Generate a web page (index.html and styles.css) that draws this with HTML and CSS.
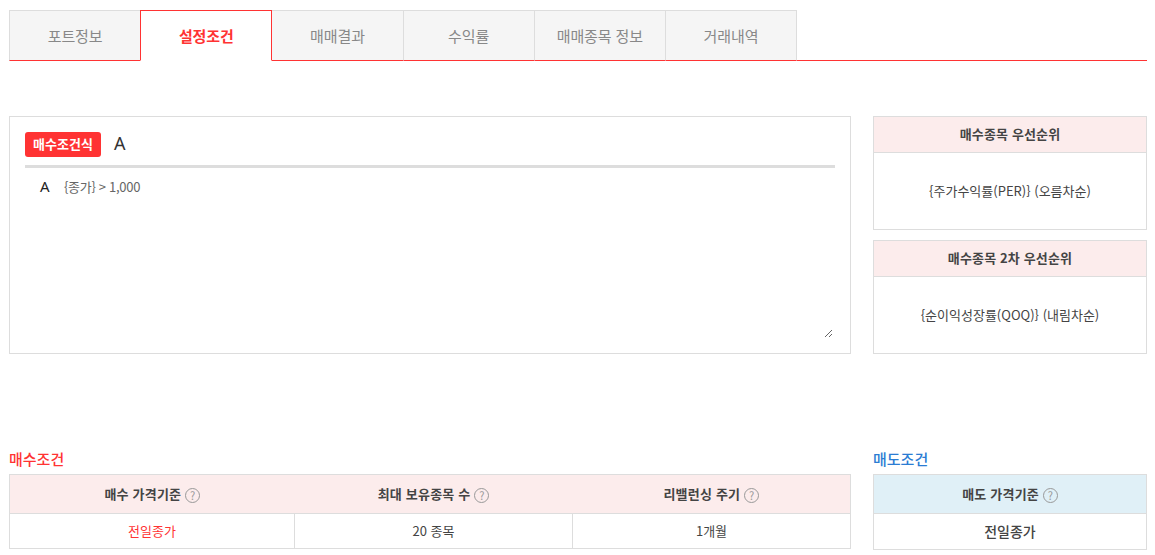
FILE: index.html
```html
<!doctype html>
<html lang="ko">
<head>
    <meta charset="UTF-8">
    <title>설정조건</title>
    <link rel="stylesheet" href="styles.css">
</head>
<body>
<!-- tabs -->
<ul class="tabs">
    <li class="tab">포트정보</li>
    <li class="tab on">설정조건</li>
    <li class="tab">매매결과</li>
    <li class="tab">수익률</li>
    <li class="tab">매매종목 정보</li>
    <li class="tab">거래내역</li>
</ul>

<div class="cond-row">
    <div class="formula">
        <div class="formula-head">
            <span class="badge">매수조건식</span>
            <span class="formula-name">A</span>
        </div>
        <div class="formula-body">
            <span class="formula-key">A</span><span class="formula-text">{종가} &gt; 1,000</span>
        </div>
    </div>
    <div class="side">
        <div class="rank">
            <div class="rank-title">매수종목 우선순위</div>
            <div class="rank-value">{주가수익률(PER)} (오름차순)</div>
        </div>
        <div class="rank">
            <div class="rank-title">매수종목 2차 우선순위</div>
            <div class="rank-value">{순이익성장률(QOQ)} (내림차순)</div>
        </div>
    </div>
</div>

<div class="bottom-row">
    <div class="buy">
        <h3 class="sec-title red">매수조건</h3>
        <table class="info">
            <tr>
                <th class="col1">매수 가격기준 <span class="help">?</span></th>
                <th class="col2">최대 보유종목 수 <span class="help">?</span></th>
                <th>리밸런싱 주기 <span class="help">?</span></th>
            </tr>
            <tr>
                <td class="red">전일종가</td>
                <td>20 종목</td>
                <td>1개월</td>
            </tr>
        </table>
    </div>
    <div class="sell">
        <h3 class="sec-title blue">매도조건</h3>
        <table class="info">
            <tr>
                <th>매도 가격기준 <span class="help">?</span></th>
            </tr>
            <tr>
                <td class="strong">전일종가</td>
            </tr>
        </table>
    </div>
</div>
</body>
</html>
```

FILE: styles.css
```css
* {
    margin: 0;
    padding: 0;
    box-sizing: border-box;
}

body {
    background: #fff;
    padding: 10px 8px 0 9px;
    font-family: "Noto Sans CJK KR", "Noto Sans", sans-serif;
    font-size: 13px;
    color: #444;
    overflow: hidden;
}

ul, li {
    list-style: none;
}

.tabs {
    display: flex;
    height: 51px;
    border-bottom: 1px solid #ff3333;
}

.tab {
    width: 131.2px;
    height: 51px;
    line-height: 49px;
    background: #f5f5f5;
    border-top: 1px solid #dddddd;
    border-left: 1px solid #dddddd;
    border-bottom: 1px solid #ff3333;
    color: #888;
    font-size: 15px;
    letter-spacing: -0.1px;
    text-align: center;
}

.tab:last-child {
    width: 132px;
    border-right: 1px solid #dddddd;
}

.tab.on {
    position: relative;
    z-index: 1;
    width: 132.2px;
    margin-right: -1px;
    background: #fff;
    border: 1px solid #ff3333;
    border-bottom: 1px solid #fff;
    color: #ff3333;
    font-weight: 700;
}

.cond-row {
    display: flex;
    justify-content: space-between;
    margin-top: 55px;
}

.formula {
    width: 842px;
    height: 238px;
    padding: 15px 15px 0;
    border: 1px solid #dddddd;
}

.formula-head {
    display: flex;
    align-items: center;
    box-sizing: content-box;
    height: 25px;
    padding-bottom: 8px;
    border-bottom: 3px solid #dddddd;
}

.badge {
    width: 76px;
    height: 25px;
    line-height: 24px;
    background: #ff3333;
    border-radius: 3px;
    color: #fff;
    font-size: 13px;
    font-weight: 700;
    text-align: center;
}

.formula-name {
    margin-left: 13px;
    line-height: 23px;
    height: 25px;
    color: #333;
    font-family: "Noto Sans", sans-serif;
    font-size: 18px;
}

.formula-body {
    width: calc(100% - 2px);
    height: 170px;
    padding: 8px 15px 0;
    overflow: auto;
    resize: vertical;
    line-height: 20px;
}

.formula-key {
    display: inline-block;
    width: 24px;
    color: #222;
    font-family: "Noto Sans", sans-serif;
    font-size: 15px;
}

.formula-text {
    color: #666;
    font-size: 13px;
    letter-spacing: -0.3px;
}

.side {
    display: flex;
    flex-direction: column;
    gap: 10px;
    width: 274px;
}

.rank {
    height: 114px;
    border: 1px solid #dddddd;
}

.rank-title {
    height: 36px;
    line-height: 34px;
    background: #fcecec;
    border-bottom: 1px solid #dddddd;
    font-weight: 700;
    letter-spacing: 0.15px;
    text-align: center;
}

.rank-value {
    line-height: 75px;
    font-size: 13px;
    color: #444;
    text-align: center;
}

.bottom-row {
    display: flex;
    justify-content: space-between;
    margin-top: 94px;
}

.buy {
    width: 842px;
}

.sell {
    width: 274px;
}

.sec-title {
    height: 26px;
    line-height: 22px;
    font-size: 15px;
    font-weight: 500;
}

.red {
    color: #ff3333;
}

.blue {
    color: #2b7cd3;
}

.info {
    width: 100%;
    border-collapse: collapse;
    table-layout: fixed;
}

.info th, .info td {
    border: 1px solid #dddddd;
    text-align: center;
    font-size: 13px;
}

.info th {
    height: 39px;
    padding-bottom: 1px;
    background: #fcecec;
    border-left: none;
    border-right: none;
    font-weight: 700;
    letter-spacing: 0.2px;
}

.info td {
    height: 35px;
    padding-bottom: 1px;
}

.info td.red {
    color: #ff3333;
}

.info th:first-child {
    border-left: 1px solid #dddddd;
}

.info th:last-child {
    border-right: 1px solid #dddddd;
}

.col1 {
    width: 285px;
}

.col2 {
    width: 278px;
}

.sell .info th {
    background: #e0f0f7;
}

.sell .info td {
    height: 36px;
}

.info td.strong {
    font-size: 14px;
    font-weight: 500;
}

.help {
    display: inline-block;
    width: 15px;
    height: 15px;
    line-height: 13px;
    border: 1px solid #999;
    border-radius: 50%;
    color: #999;
    font-size: 11px;
    font-weight: 400;
    letter-spacing: 0;
    text-align: center;
    vertical-align: -1px;
}
```
